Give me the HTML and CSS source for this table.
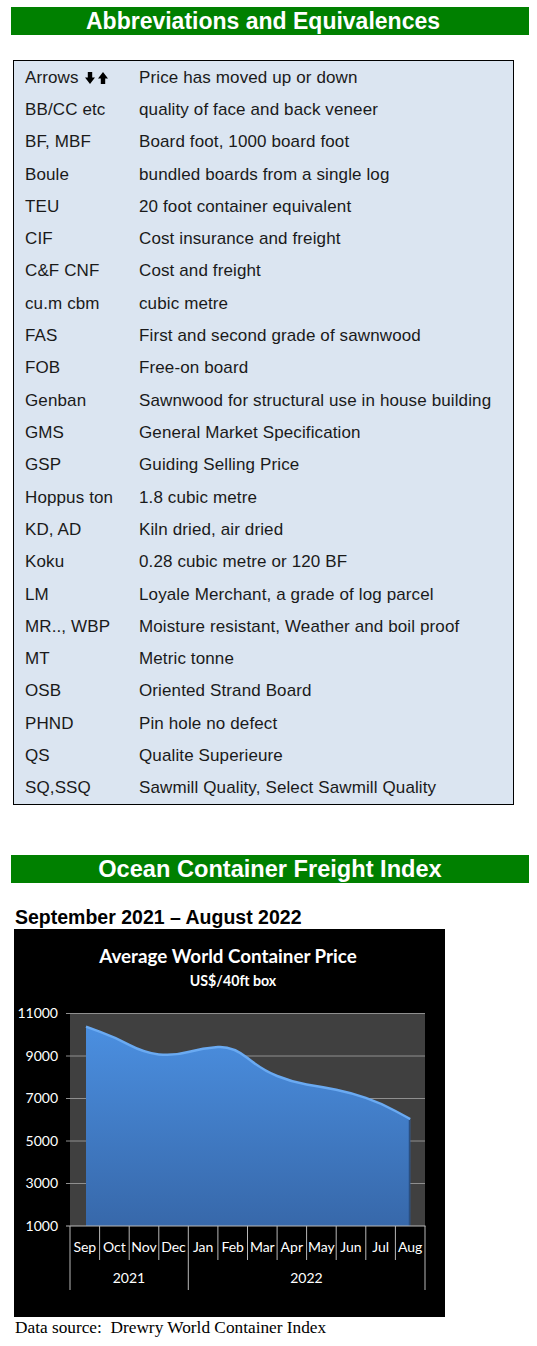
FILE: index.html
```html
<!DOCTYPE html>
<html>
<head>
<meta charset="utf-8">
<link rel="stylesheet" href="styles.css">
</head>
<body>
<div class="page">
  <h2 class="bar bar-first">Abbreviations and Equivalences</h2>

  <div class="abbr">
    <div class="row"><span class="k">Arrows <svg class="arr" width="10" height="12" viewBox="0 0 10 12"><path d="M2.8 0H7.2V5.6H10L5 12L0 5.6H2.8Z" fill="#000"/></svg><svg class="arr" width="10" height="12" viewBox="0 0 10 12"><path d="M2.8 12H7.2V6.4H10L5 0L0 6.4H2.8Z" fill="#000"/></svg></span><span class="v">Price has moved up or down</span></div>
    <div class="row"><span class="k">BB/CC etc</span><span class="v">quality of face and back veneer</span></div>
    <div class="row"><span class="k">BF, MBF</span><span class="v">Board foot, 1000 board foot</span></div>
    <div class="row"><span class="k">Boule</span><span class="v">bundled boards from a single log</span></div>
    <div class="row"><span class="k">TEU</span><span class="v">20 foot container equivalent</span></div>
    <div class="row"><span class="k">CIF</span><span class="v">Cost insurance and freight</span></div>
    <div class="row"><span class="k">C&amp;F CNF</span><span class="v">Cost and freight</span></div>
    <div class="row"><span class="k">cu.m cbm</span><span class="v">cubic metre</span></div>
    <div class="row"><span class="k">FAS</span><span class="v">First and second grade of sawnwood</span></div>
    <div class="row"><span class="k">FOB</span><span class="v">Free-on board</span></div>
    <div class="row"><span class="k">Genban</span><span class="v">Sawnwood for structural use in house building</span></div>
    <div class="row"><span class="k">GMS</span><span class="v">General Market Specification</span></div>
    <div class="row"><span class="k">GSP</span><span class="v">Guiding Selling Price</span></div>
    <div class="row"><span class="k">Hoppus ton</span><span class="v">1.8 cubic metre</span></div>
    <div class="row"><span class="k">KD, AD</span><span class="v">Kiln dried, air dried</span></div>
    <div class="row"><span class="k">Koku</span><span class="v">0.28 cubic metre or 120 BF</span></div>
    <div class="row"><span class="k">LM</span><span class="v">Loyale Merchant, a grade of log parcel</span></div>
    <div class="row"><span class="k">MR.., WBP</span><span class="v">Moisture resistant, Weather and boil proof</span></div>
    <div class="row"><span class="k">MT</span><span class="v">Metric tonne</span></div>
    <div class="row"><span class="k">OSB</span><span class="v">Oriented Strand Board</span></div>
    <div class="row"><span class="k">PHND</span><span class="v">Pin hole no defect</span></div>
    <div class="row"><span class="k">QS</span><span class="v">Qualite Superieure</span></div>
    <div class="row"><span class="k">SQ,SSQ</span><span class="v">Sawmill Quality, Select Sawmill Quality</span></div>
  </div>

  <h2 class="bar bar-second">Ocean Container Freight Index</h2>

  <div class="period">September 2021 – August 2022</div>

  <div class="chart">
    <svg width="431" height="388" viewBox="0 0 431 388">
      <defs>
        <linearGradient id="fillg" x1="0" y1="0" x2="0" y2="1">
          <stop offset="0" stop-color="#4b8fe0"/>
          <stop offset="1" stop-color="#3768aa"/>
        </linearGradient>
      </defs>
      <text class="ct-title" x="214" y="34" text-anchor="middle">Average World Container Price</text>
      <text class="ct-sub" x="219" y="57" text-anchor="middle">US$/40ft box</text>

      <rect x="56" y="84" width="355" height="213" fill="#404040"/>
      <g stroke="#8f8f8f" stroke-width="1">
        <line x1="52" y1="84.5" x2="411" y2="84.5"/>
        <line x1="52" y1="127" x2="411" y2="127"/>
        <line x1="52" y1="169.5" x2="411" y2="169.5"/>
        <line x1="52" y1="212" x2="411" y2="212"/>
        <line x1="52" y1="254.5" x2="411" y2="254.5"/>
      </g>

      <path d="M72,297 L72,97.7 L86.2,102.9 Q100.4,108 115.2,115.9 Q130,123.7 144.8,125.4 Q159.5,127 174.3,123 Q189.1,119 203.9,118 Q218.7,117 233.5,129 Q248.3,141 263.1,147 Q277.8,153 292.6,155.4 Q307.4,157.7 322.2,160.7 Q337,163.7 351.8,168.9 Q366.6,174 381.4,182 L396.2,190 L396.2,297 Z" fill="url(#fillg)"/>
      <path d="M72,97.7 L86.2,102.9 Q100.4,108 115.2,115.9 Q130,123.7 144.8,125.4 Q159.5,127 174.3,123 Q189.1,119 203.9,118 Q218.7,117 233.5,129 Q248.3,141 263.1,147 Q277.8,153 292.6,155.4 Q307.4,157.7 322.2,160.7 Q337,163.7 351.8,168.9 Q366.6,174 381.4,182 L396.2,190" fill="none" stroke="#6aaaf2" stroke-width="2.5"/>
      <line x1="395.5" y1="191" x2="395.5" y2="297" stroke="#2a4f80" stroke-width="1.5"/>

      <g stroke="#b8b8b8" stroke-width="1">
        <line x1="52" y1="297" x2="411.5" y2="297"/>
        <line x1="56" y1="297" x2="56" y2="361"/>
        <line x1="85.6" y1="297" x2="85.6" y2="331"/>
        <line x1="115.2" y1="297" x2="115.2" y2="331"/>
        <line x1="144.8" y1="297" x2="144.8" y2="331"/>
        <line x1="174.3" y1="297" x2="174.3" y2="361"/>
        <line x1="203.9" y1="297" x2="203.9" y2="331"/>
        <line x1="233.5" y1="297" x2="233.5" y2="331"/>
        <line x1="263.1" y1="297" x2="263.1" y2="331"/>
        <line x1="292.6" y1="297" x2="292.6" y2="331"/>
        <line x1="322.2" y1="297" x2="322.2" y2="331"/>
        <line x1="351.8" y1="297" x2="351.8" y2="331"/>
        <line x1="381.4" y1="297" x2="381.4" y2="331"/>
        <line x1="411" y1="297" x2="411" y2="361"/>
      </g>

      <g class="ct-axis" text-anchor="end">
        <text x="44" y="89">11000</text>
        <text x="44" y="131.5">9000</text>
        <text x="44" y="174">7000</text>
        <text x="44" y="216.5">5000</text>
        <text x="44" y="259">3000</text>
        <text x="44" y="301.5">1000</text>
      </g>
      <g class="ct-axis" text-anchor="middle">
        <text x="70.8" y="323">Sep</text>
        <text x="100.4" y="323">Oct</text>
        <text x="130" y="323">Nov</text>
        <text x="159.5" y="323">Dec</text>
        <text x="189.1" y="323">Jan</text>
        <text x="218.7" y="323">Feb</text>
        <text x="248.3" y="323">Mar</text>
        <text x="277.8" y="323">Apr</text>
        <text x="307.4" y="323">May</text>
        <text x="337" y="323">Jun</text>
        <text x="366.6" y="323">Jul</text>
        <text x="396.2" y="323">Aug</text>
        <text x="115" y="354">2021</text>
        <text x="292.5" y="354">2022</text>
      </g>
    </svg>
  </div>

  <div class="source">Data source:  Drewry World Container Index</div>
</div>
</body>
</html>
```

FILE: styles.css
```css
html, body {
  margin: 0;
  padding: 0;
  background: #ffffff;
}

.page {
  padding-top: 7px;
  font-family: "Liberation Sans", Arial, sans-serif;
  color: #111;
}

.bar {
  margin: 0 0 0 11px;
  width: 518px;
  height: 28px;
  background: #008000;
  color: #ffffff;
  font-family: "Liberation Sans", Arial, sans-serif;
  font-weight: bold;
  font-size: 23px;
  line-height: 28px;
  text-align: center;
  box-sizing: border-box;
}

.bar-first {
  padding-right: 14px;
}

.abbr {
  margin: 25px 0 0 13px;
  width: 501px;
  height: 745px;
  box-sizing: border-box;
  border: 1px solid #000;
  border-width: 1px 1.5px 1.5px 1px;
  background: #dbe5f1;
  display: grid;
  grid-template-rows: repeat(23, 1fr);
  padding: 0 0 0 11px;
}

.row {
  display: flex;
  align-items: center;
  font-size: 17px;
  letter-spacing: 0.12px;
  color: #1a1a1a;
  padding-top: 1px;
}

.k {
  width: 114px;
  flex: none;
  display: flex;
  align-items: center;
  white-space: nowrap;
}

.arr {
  display: block;
  margin-left: 6px;
}

.arr + .arr {
  margin-left: 3px;
}

.v {
  white-space: nowrap;
}

.bar-second {
  margin-top: 50px;
  font-size: 23.6px;
}

.period {
  margin: 23px 0 0 15px;
  font-weight: bold;
  font-size: 19.5px;
  line-height: 22px;
  color: #000;
}

.chart {
  margin: 1px 0 0 14px;
  width: 431px;
  height: 388px;
  background: #000;
}

.chart svg {
  display: block;
}

.ct-title {
  font-family: Lato, "Open Sans", sans-serif;
  font-weight: bold;
  font-size: 18.8px;
  fill: #ffffff;
}

.ct-sub {
  font-family: Lato, "Open Sans", sans-serif;
  font-weight: bold;
  font-size: 14.2px;
  fill: #ffffff;
}

.ct-axis text {
  font-family: Lato, "Open Sans", sans-serif;
  font-size: 14px;
  fill: #ffffff;
}

.source {
  margin: 1px 0 0 15px;
  font-family: "Liberation Serif", "Times New Roman", serif;
  font-size: 17.3px;
  line-height: 19px;
  color: #000;
  white-space: pre;
}
```
